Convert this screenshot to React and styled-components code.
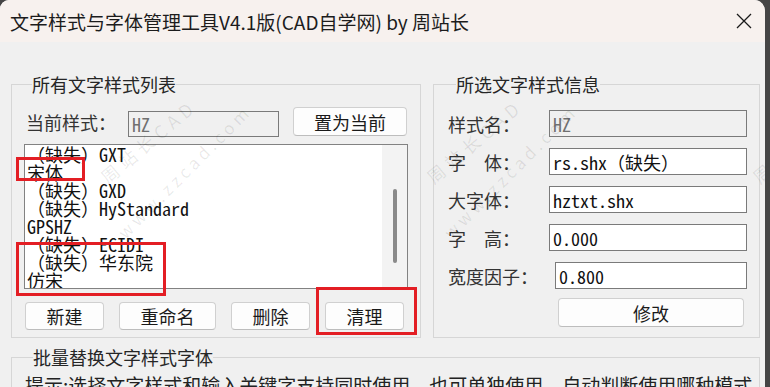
import React from "react";
import styled, { createGlobalStyle } from "styled-components";

const UI = `"Noto Sans CJK SC", "Noto Sans", sans-serif`;
const MONO = `"Noto Sans Mono CJK SC", "Liberation Mono", "Noto Sans CJK SC", monospace`;

const GlobalStyle = createGlobalStyle`
  html, body { margin: 0; padding: 0; background: #454545; }
  body { width: 770px; height: 387px; overflow: hidden; font-family: ${UI}; }
  * { box-sizing: border-box; }
`;

const Window = styled.div`
  position: relative;
  width: 765px;
  height: 387px;
  background: #f0f0f0;
  border-radius: 9px 11px 0 0;
  overflow: hidden;
  display: flex;
  flex-direction: column;
`;

const TitleBar = styled.header`
  flex: none;
  height: 42px;
  display: flex;
  align-items: center;
  justify-content: space-between;
  padding: 0 13px 0 10px;
  background: #f7f1ee;
  font: 19px/1 ${UI};
  color: #1c1c1c;
`;

const CloseIcon = styled.svg`
  width: 16px;
  height: 16px;
  display: block;
`;

const Body = styled.main`
  flex: 1;
  padding: 33px 5px 0 11px;
  display: flex;
  flex-direction: column;
`;

const TopRow = styled.div`
  display: grid;
  grid-template-columns: 410px 327px;
  column-gap: 12px;
`;

const Group = styled.fieldset`
  margin: ${(p) => p.$mt || 0}px 0 0 0;
  padding: ${(p) => p.$pad};
  border: 1px solid #d6d6d6;
  min-width: 0;
`;

const Legend = styled.legend`
  margin-left: 8px;
  padding: 0;
  font: 18px/18px ${UI};
  color: #262626;
`;

const Column = styled.div`
  display: flex;
  flex-direction: column;
  gap: ${(p) => p.$gap || 0}px;
`;

const StyleRow = styled.div`
  display: flex;
  align-items: flex-start;
  height: 30px;
`;

const Label = styled.span`
  flex: none;
  align-self: center;
  width: ${(p) => p.$w}px;
  padding-left: ${(p) => p.$indent || 0}px;
  font: 18px/1 ${UI};
  color: #333;
  white-space: pre;
`;

const Field = styled.div`
  flex: none;
  width: ${(p) => p.$w}px;
  height: ${(p) => p.$h || 27}px;
  margin-top: ${(p) => p.$mt || 0}px;
  display: flex;
  align-items: center;
  padding-left: 3px;
  border: 1px solid #7a7a7a;
  background: ${(p) => (p.$disabled ? "#f0f0f0" : "#ffffff")};
  color: ${(p) => (p.$disabled ? "#707070" : "#111")};
  font: 18px/1 ${MONO};
  white-space: pre;
`;

const Button = styled.button`
  flex: none;
  width: ${(p) => p.$w}px;
  height: ${(p) => p.$h || 28}px;
  margin: 0 ${(p) => p.$mr || 0}px 0 ${(p) => p.$ml || 0}px;
  padding: 0;
  border: 1px solid #d0d0d0;
  border-bottom-color: #bdbdbd;
  border-radius: 4px;
  background: #fdfdfd;
  font: 18px/1 ${UI};
  color: #1a1a1a;
`;

const ListBox = styled.div`
  margin-top: 7px;
  height: 145px;
  border: 1px solid #828282;
  background: #fff;
  display: flex;
  overflow: hidden;
`;

const ListItems = styled.ul`
  flex: 1;
  margin: 0;
  padding: 0 0 0 2px;
  list-style: none;
  font: 18px/18px ${MONO};
  color: #111;
`;

const Item = styled.li`
  height: 18px;
  white-space: pre;
`;

const Track = styled.div`
  flex: none;
  width: 25px;
  padding-top: 44px;
  background: #f3f3f3;
  display: flex;
  justify-content: center;
`;

const Thumb = styled.div`
  width: 4px;
  height: 74px;
  border-radius: 2px;
  background: #8a8a8a;
`;

const ButtonRow = styled.div`
  display: flex;
  gap: 15px;
  margin-top: 13px;
  padding-left: 1px;
`;

const InfoRow = styled.div`
  display: flex;
  align-items: center;
  justify-content: space-between;
  height: 27px;
`;

const ActionRow = styled.div`
  display: flex;
  justify-content: flex-end;
  margin-top: -2px;
`;

const Hint = styled.p`
  margin: 0;
  font: 19px/20px ${UI};
  color: #222;
  white-space: nowrap;
`;

const Overlay = styled.div`
  position: absolute;
  inset: 0;
  pointer-events: none;
  overflow: hidden;
`;

const Mark = styled.span`
  position: absolute;
  left: ${(p) => p.$x}px;
  top: ${(p) => p.$y}px;
  transform: translate(-50%, -50%) rotate(${(p) => p.$r}deg);
  font: ${(p) => p.$size}px/1 ${UI};
  letter-spacing: ${(p) => p.$ls}px;
  color: rgba(0, 0, 0, 0.09);
  white-space: nowrap;
`;

const RedBox = styled.div`
  position: absolute;
  left: ${(p) => p.$x}px;
  top: ${(p) => p.$y}px;
  width: ${(p) => p.$w}px;
  height: ${(p) => p.$h}px;
  border: 3px solid #e31e24;
`;

const listItems = [
  "（缺失）GXT",
  "宋体",
  "（缺失）GXD",
  "（缺失）HyStandard",
  "GPSHZ",
  "（缺失）ECIDI",
  "（缺失）华东院",
  "仿宋",
];

const tiles = [0, 326, 652];

export default function App() {
  return (
    <>
      <GlobalStyle />
      <Window>
        <TitleBar>
          <span>文字样式与字体管理工具V4.1版(CAD自学网) by 周站长</span>
          <CloseIcon viewBox="0 0 16 16">
            <path d="M1 1 L15 15 M15 1 L1 15" stroke="#1a1a1a" strokeWidth="1.3" fill="none" />
          </CloseIcon>
        </TitleBar>
        <Body>
          <TopRow>
            <Group $pad="14px 12px 6px 12px">
              <Legend>所有文字样式列表</Legend>
              <Column>
                <StyleRow>
                  <Label $w={104} $indent={2}>当前样式：</Label>
                  <Field $w={151} $h={26} $mt={4} $disabled>HZ</Field>
                  <Button $w={114} $h={29} $ml={14}>置为当前</Button>
                </StyleRow>
                <ListBox>
                  <ListItems>
                    {listItems.map((t) => (
                      <Item key={t}>{t}</Item>
                    ))}
                  </ListItems>
                  <Track>
                    <Thumb />
                  </Track>
                </ListBox>
                <ButtonRow>
                  <Button $w={79}>新建</Button>
                  <Button $w={97}>重命名</Button>
                  <Button $w={79}>删除</Button>
                  <Button $w={79}>清理</Button>
                </ButtonRow>
              </Column>
            </Group>
            <Group $pad="17px 12px 10px 14px">
              <Legend>所选文字样式信息</Legend>
              <Column $gap={11}>
                <InfoRow>
                  <Label>样式名：</Label>
                  <Field $w={198} $disabled>HZ</Field>
                </InfoRow>
                <InfoRow>
                  <Label>字　体：</Label>
                  <Field $w={198}>rs.shx（缺失）</Field>
                </InfoRow>
                <InfoRow>
                  <Label>大字体：</Label>
                  <Field $w={198}>hztxt.shx</Field>
                </InfoRow>
                <InfoRow>
                  <Label>字　高：</Label>
                  <Field $w={198}>0.000</Field>
                </InfoRow>
                <InfoRow>
                  <Label>宽度因子：</Label>
                  <Field $w={192}>0.800</Field>
                </InfoRow>
                <ActionRow>
                  <Button $w={186} $h={29} $mr={3}>修改</Button>
                </ActionRow>
              </Column>
            </Group>
          </TopRow>
          <Group $mt={10} $pad="9px 12px 0 13px">
            <Legend>批量替换文字样式字体</Legend>
            <Hint>提示:选择文字样式和输入关键字支持同时使用，也可单独使用，自动判断使用哪种模式</Hint>
          </Group>
        </Body>
        <Overlay>
          {tiles.map((dx) => (
            <React.Fragment key={dx}>
              <Mark $x={148 + dx} $y={141} $r={-40} $size={18} $ls={5}>周站长CAD</Mark>
              <Mark $x={184 + dx} $y={171} $r={-45} $size={17} $ls={4}>www.zzcad.com</Mark>
            </React.Fragment>
          ))}
          <RedBox $x={16} $y={157} $w={69} $h={24} />
          <RedBox $x={16} $y={242} $w={150} $h={54} />
          <RedBox $x={316} $y={287} $w={101} $h={48} />
        </Overlay>
      </Window>
    </>
  );
}
